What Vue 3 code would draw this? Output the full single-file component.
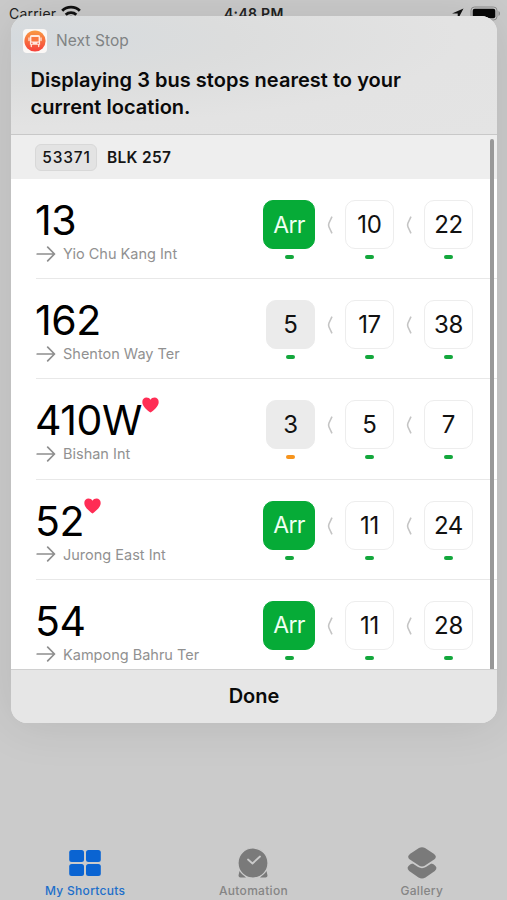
<script setup>
const rows = [
  { no: '13', dest: 'Yio Chu Kang Int', fav: false, times: [['Arr', 'green'], ['10', 'green'], ['22', 'green']] },
  { no: '162', dest: 'Shenton Way Ter', fav: false, times: [['5', 'green'], ['17', 'green'], ['38', 'green']] },
  { no: '410W', dest: 'Bishan Int', fav: true, times: [['3', 'orange'], ['5', 'green'], ['7', 'green']] },
  { no: '52', dest: 'Jurong East Int', fav: true, times: [['Arr', 'green'], ['11', 'green'], ['24', 'green']] },
  { no: '54', dest: 'Kampong Bahru Ter', fav: false, times: [['Arr', 'green'], ['11', 'green'], ['28', 'green']] },
]
</script>

<template>
  <div class="screen">
    <header class="status">
      <span class="carrier">Carrier</span>
      <svg class="wifi" width="20" height="16" viewBox="0 0 20 16" fill="none" stroke="#111" stroke-width="2.800">
        <path d="M1.200 5.800C5.800 1 14.200 1 18.800 5.800" />
        <path d="M4.700 9.800C7.600 7 12.400 7 15.300 9.800" />
        <path d="M7.800 13C9 12 11 12 12.200 13" />
      </svg>
      <span class="clock">4:48 PM</span>
      <svg class="loc" width="12" height="12" viewBox="0 0 12 12"><path d="M11.500 .5L0 5.600H5.700V11.500Z" fill="#111" /></svg>
      <svg class="battery" width="31" height="15" viewBox="0 0 31 15">
        <rect x="1" y="1" width="26" height="13" rx="3.500" fill="none" stroke="#8d8d8d" />
        <rect x="2.700" y="2.700" width="22.600" height="9.600" rx="2" fill="#080808" />
        <path d="M28.500 5v5c2-.8 2-4.200 0-5Z" fill="#8d8d8d" />
      </svg>
    </header>

    <main class="sheet">
      <section class="intro">
        <div class="app">
          <svg class="appicon" width="24" height="24" viewBox="0 0 24 24">
            <defs>
              <linearGradient id="sun" x1="0" y1="0" x2="0" y2="1">
                <stop offset="0" stop-color="#f99a43" /><stop offset="1" stop-color="#f6403a" />
              </linearGradient>
            </defs>
            <rect width="24" height="24" rx="4" fill="#fbf8f6" />
            <circle cx="12" cy="12" r="10.600" fill="url(#sun)" />
            <path d="M8.500 6h7q1.600 0 1.600 1.600v8.200H6.900V7.600Q6.900 6 8.500 6Z" fill="#ffe9df" />
            <rect x="8.400" y="8" width="7.200" height="4.600" rx=".5" fill="#f97740" />
            <path d="M6 9v2.500M18 9v2.500M8.300 15.500v2M15.700 15.500v2" stroke="#ffe9df" stroke-width="1.300" stroke-linecap="round" />
            <circle cx="8.900" cy="14.300" r=".8" fill="#f65a3c" /><circle cx="15.100" cy="14.300" r=".8" fill="#f65a3c" />
          </svg>
          <span class="appname">Next Stop</span>
        </div>
        <h1>Displaying 3 bus stops nearest to your<br>current location.</h1>
      </section>

      <section class="list">
        <div class="stop"><span class="code">53371</span><span class="name">BLK 257</span></div>
        <article v-for="r in rows" :key="r.no" class="row">
          <div class="info">
            <div class="no"><span>{{ r.no }}</span>
              <svg v-if="r.fav" class="heart" width="17" height="16" viewBox="0 0 17 16"><path d="M8.500 15.500C5.500 13.200.3 9.600.3 4.900.3 2.300 2.200.5 4.500.5c1.700 0 3.200.9 4 2.300C9.300 1.400 10.800.5 12.500.5c2.300 0 4.200 1.800 4.200 4.400 0 4.700-5.200 8.300-8.200 10.600Z" fill="#ff2d55" /></svg>
            </div>
            <div class="dest">
              <svg width="20" height="16" viewBox="0 0 20 16" fill="none" stroke="#8e8e8e" stroke-width="1.700" stroke-linecap="round" stroke-linejoin="round"><path d="M1.200 8H18.500M11.700 1.200L18.500 8l-6.800 6.800" /></svg>
              <span>{{ r.dest }}</span>
            </div>
          </div>
          <div class="times">
            <template v-for="(t, i) in r.times" :key="i">
              <svg v-if="i" class="chev" width="6" height="18" viewBox="0 0 6 18" fill="none" stroke="#c4c4c4" stroke-width="1.600" stroke-linejoin="round"><path d="M5 .6L2 7Q1.100 9 2 11L5 17.400" /></svg>
              <div class="slot" :class="{ arr: t[0] === 'Arr', first: i === 0 }">
                <div class="box">{{ t[0] }}</div>
                <i class="load" :class="t[1]"></i>
              </div>
            </template>
          </div>
        </article>
        <div class="scroll"></div>
      </section>
      <button class="done">Done</button>
    </main>

    <nav class="tabs">
      <div class="tab active">
        <svg width="34" height="34" viewBox="0 0 34 34" fill="#0a64d2"><rect x="1.200" y="4" width="14.800" height="12" rx="2.500" /><rect x="18" y="4" width="14.800" height="12" rx="2.500" /><rect x="1.200" y="18" width="14.800" height="12" rx="2.500" /><rect x="18" y="18" width="14.800" height="12" rx="2.500" /></svg>
        <span>My Shortcuts</span>
      </div>
      <div class="tab">
        <svg width="34" height="34" viewBox="0 0 34 34"><path d="M3.500 25L10 31.600H4.500Q2.500 31.600 2.500 29.600ZM30.500 25L24 31.600H29.500Q31.500 31.600 31.500 29.600Z" fill="#7a7a7a" /><circle cx="17" cy="17" r="15" fill="#7a7a7a" stroke="#cbcbcb" stroke-width="1.200" /><path d="M12 13.500L16.500 17.500L24 10.500" fill="none" stroke="#cbcbcb" stroke-width="1.800" stroke-linecap="round" stroke-linejoin="round" /></svg>
        <span>Automation</span>
      </div>
      <div class="tab">
        <svg width="34" height="34" viewBox="0 0 34 34"><path d="M17 14L28.500 18.200Q33.600 21.500 29.800 25L20.500 31.400Q17 33.700 13.500 31.400L4.200 25Q.4 21.500 5.500 18.200Z" fill="#7a7a7a" /><path d="M13.500 1.300Q17 -.7 20.500 1.300L29.600 7.300Q33.800 10.700 29.600 14.300L20.500 20.300Q17 22.300 13.500 20.300L4.400 14.300Q.2 10.700 4.400 7.300Z" fill="#7a7a7a" stroke="#cbcbcb" stroke-width="1.700" /></svg>
        <span>Gallery</span>
      </div>
    </nav>
  </div>
</template>

<style>
body { background: #cbcbcb; overflow: hidden; }
</style>
<style scoped>
* { box-sizing: border-box; }
.screen { position: relative; width: 507px; height: 900px; overflow: hidden; background: #cbcbcb; font-family: Inter, "Liberation Sans", sans-serif; display: flex; flex-direction: column; align-items: center; }
.status { width: 100%; height: 15.500px; display: flex; align-items: flex-start; padding: 5px 4px 0 9px; color: #222; }
.status > * { flex: none; }
.carrier { font-size: 14px; line-height: 17px; letter-spacing: .2px; width: 47px; }
.wifi { margin: 0 0 0 5px; }
.clock { margin-left: 143px; font-size: 14px; line-height: 17px; font-weight: 600; letter-spacing: .3px; width: 62px; white-space: nowrap; }
.loc { margin: 3px 0 0 166px; }
.battery { margin: 1px 0 0 6px; }
.sheet { position: relative; width: 486px; height: 707.500px; margin-left: 1px; border-radius: 16px; overflow: hidden; display: flex; flex-direction: column; background: #e6e6e6; flex: none; box-shadow: 0 0 50px rgba(0, 0, 0, .1); }
.intro { height: 119.500px; padding: 13px 12px 0; border-bottom: 1px solid #c8c8c8; background: radial-gradient(ellipse at 0 20%, #d5dade 0, #dcdddd 32%, #e3e3e3 65%, #e4e4e4 100%); flex: none; }
.app { display: flex; align-items: center; gap: 9px; height: 24px; color: #808384; }
.appname { font-size: 15.500px; letter-spacing: .08px; }
h1 { margin: 14px 0 0 7.500px; font-size: 20px; line-height: 27px; font-weight: 600; letter-spacing: .03px; color: #0a0a0a; white-space: nowrap; }
.list { position: relative; height: 534px; overflow: hidden; background: #fff; flex: none; }
.stop { height: 44px; background: #eee; display: flex; align-items: center; padding-left: 24px; gap: 10px; font-size: 15.500px; font-weight: 600; color: #151515; }
.name { letter-spacing: .3px; }
.code { width: 62px; height: 27px; border: 1px solid #d8d8d8; border-radius: 6px; background: #e3e3e3; font-weight: 500; letter-spacing: .85px; padding-left: 1px; display: grid; place-items: center; }
.row { height: 100.200px; margin-left: 25px; border-bottom: 1.500px solid #e8e8e8; display: flex; justify-content: space-between; padding-right: 24px; }
.row:last-of-type { border: 0; }
.no { height: 50px; margin: 16px 0 0 -1px; display: flex; font-size: 41px; line-height: 50px; letter-spacing: -.4px; color: #000; }
.heart { margin: 2px 0 0 0; }
.dest { display: flex; align-items: center; gap: 7px; height: 17px; color: #919191; font-size: 14.500px; white-space: nowrap; }
.dest svg { flex: none; }
.times { display: flex; padding-top: 21px; }
.slot { width: 49px; display: flex; flex-direction: column; align-items: center; }
.box { width: 49px; height: 49px; border: 1.500px solid #ededed; border-radius: 10px; display: grid; place-items: center; font-size: 24px; letter-spacing: -.3px; color: #111; flex: none; }
.first .box { background: #ebebeb; border-color: #ebebeb; }
.arr { width: 52px; }
.arr .box { width: 52px; background: #06ab37; border-color: #06ab37; color: #effff2; font-size: 23px; letter-spacing: -.6px; }
.load { width: 9px; height: 4px; margin-top: 6px; border-radius: 2px; background: #13a73c; }
.load.orange { background: #f7941d; }
.chev { margin: 16px 12px 0; flex: none; }
.scroll { position: absolute; right: 3.500px; top: 4px; width: 3.500px; height: 530px; border-radius: 2px 2px 0 0; background: #989898; }
.done { height: 54px; border: 0; border-top: 1px solid #d0d0d0; background: #e6e6e6; font: 600 20px Inter, sans-serif; color: #0a0a0a; padding: 0 0 1px; }
.tabs { width: 100%; margin-top: auto; height: 54px; padding: 0 1px; display: flex; }
.tab { width: 168.500px; display: flex; flex-direction: column; align-items: center; font-size: 12px; line-height: 15px; font-weight: 500; letter-spacing: .3px; color: #858585; gap: 3px; }
.active { color: #1d6fca; }
</style>
